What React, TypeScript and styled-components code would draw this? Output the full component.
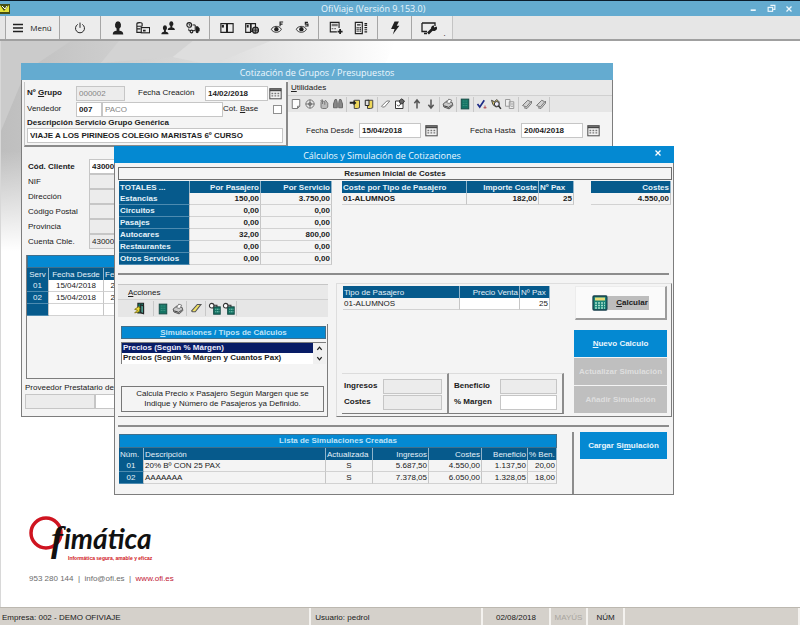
import React from "react";
import styled, { createGlobalStyle, css } from "styled-components";

const Global = createGlobalStyle`
  *, *::before, *::after { box-sizing: border-box; }
  html, body { margin: 0; padding: 0; }
  body { font: 8px/12px "Liberation Sans", Arial, sans-serif; color: #202020; background: #fff; }
  button, input, select, table { font: inherit; color: inherit; }
  button { padding: 0; border: 0; background: none; }
`;

const C = {
  sky: "#64abd0",
  blue: "#0489d2",
  navy: "#065a8c",
  face: "#f4f4f4",
  bar: "#e6e6e6",
  line: "#7d7d7d",
  soft: "#c6c6c6",
};

/* ---------- shell ---------- */

const Shell = styled.div`
  display: flex;
  flex-direction: column;
  min-height: 100vh;
`;

const TitleBar = styled.header`
  display: grid;
  grid-template-columns: 6fr auto 7fr;
  align-items: center;
  height: 16px;
  border-top: 1px solid #0b1c2c;
  background: ${C.sky};
  color: #eaf6fc;
  font: 9px/14px "Open Sans", sans-serif;
`;

const AppTitle = styled.h1`
  margin: 0;
  font: inherit;
  white-space: nowrap;
`;

const WindowControls = styled.div`
  display: flex;
  justify-content: flex-end;
  gap: 8px;
  padding-right: 6px;
`;

const ControlButton = styled.button`
  display: flex;
  align-items: center;
  justify-content: center;
  width: 10px;
  height: 12px;
  color: #eef8fd;
`;

const MainToolbar = styled.nav`
  display: flex;
  align-items: stretch;
  height: 25px;
  padding-left: 5px;
  background: ${C.bar};
  border-bottom: 2px solid #a0a0a0;
  font: 8px/12px "Open Sans", sans-serif;
`;

const ToolGroup = styled.div<{ $last?: boolean }>`
  display: flex;
  padding: 0 4px;
  background: #ececec;
  border-left: 1px solid #a6a6a6;
  ${(p) => p.$last && css`border-right: 1px solid #c4c4c4;`}
`;

const ToolButton = styled.button<{ $wide?: boolean }>`
  display: flex;
  align-items: center;
  justify-content: center;
  gap: 7px;
  width: ${(p) => (p.$wide ? "45px" : "25px")};
`;

const PowerButton = styled(ToolButton)`
  width: 32px;
`;

const DropMark = styled.button`
  align-self: flex-end;
  width: 7px;
  line-height: 12px;
`;

const Desktop = styled.main`
  position: relative;
  flex: 1;
  overflow: hidden;
  border-left: 1px solid #d8d8d8;
`;

const Backdrop = styled.svg`
  position: absolute;
  inset: 0;
  width: 100%;
  height: 100%;
`;

const StatusBar = styled.footer`
  display: flex;
  height: 18px;
  background: #d5d1cb;
  border-top: 1px solid #bcb8b0;
  line-height: 19px;
`;

const StatusCell = styled.div<{ $w?: number; $grow?: boolean; $off?: boolean; $center?: boolean }>`
  ${(p) => (p.$grow ? "flex: 1;" : `flex: 0 0 ${p.$w}px;`)}
  padding-left: ${(p) => (p.$center ? 0 : 2)}px;
  text-align: ${(p) => (p.$center ? "center" : "left")};
  border-right: 2px solid #f4f2ef;
  color: ${(p) => (p.$off ? "#a9a59e" : "inherit")};
  white-space: nowrap;
`;

/* ---------- windows ---------- */

const Window = styled.section<{ $x: number; $y: number; $w: number }>`
  position: absolute;
  left: ${(p) => p.$x}px;
  top: ${(p) => p.$y}px;
  width: ${(p) => p.$w}px;
  background: ${C.face};
  border: 1px solid ${C.line};
  border-top: 0;
`;

const WindowHead = styled.header<{ $active?: boolean }>`
  position: relative;
  margin: 0 -1px;
  height: 17px;
  background: ${(p) => (p.$active ? C.blue : C.sky)};
  color: #eef8fe;
  text-align: center;
`;

const WindowTitle = styled.h2<{ $shift?: boolean }>`
  margin: 0;
  padding-right: ${(p) => (p.$shift ? 24 : 0)}px;
  font: 9px/20px "Open Sans", sans-serif;
`;

const WindowClose = styled.button`
  position: absolute;
  right: 12px;
  top: 3px;
  width: 8px;
  height: 8px;
  display: flex;
  color: #fff;
`;

/* ---------- form parts ---------- */

const Row = styled.div<{ $h?: number }>`
  display: flex;
  align-items: center;
  height: ${(p) => p.$h ?? 16}px;
`;

const Label = styled.label<{ $w?: number; $bold?: boolean; $indent?: number }>`
  flex: none;
  ${(p) => p.$w && `width: ${p.$w}px;`}
  padding-left: ${(p) => p.$indent ?? 0}px;
  font-weight: ${(p) => (p.$bold ? 700 : 400)};
  white-space: nowrap;
`;

const Field = styled.input<{ $w?: number; $bold?: boolean; $off?: boolean; $pale?: boolean }>`
  ${(p) => (p.$w ? `flex: none; width: ${p.$w}px;` : "flex: 1; min-width: 0; width: 100%;")}
  height: 15px;
  padding: 0 2px;
  border: 1px solid ${C.soft};
  border-radius: 0;
  outline: 0;
  background: ${(p) => (p.$off ? "#ececec" : "#fff")};
  color: ${(p) => (p.$pale ? "#858585" : "#1c1c1c")};
  font-weight: ${(p) => (p.$bold ? 700 : 400)};
`;

const Tick = styled.input`
  appearance: none;
  width: 9px;
  height: 9px;
  margin: 0 1px 0 auto;
  border: 1px solid #8f8f8f;
  background: #fff;
`;

const IconButton = styled.button<{ $w?: number }>`
  display: flex;
  align-items: center;
  justify-content: center;
  width: ${(p) => p.$w ?? 14}px;
  height: 15px;
`;

/* ---------- tables ---------- */

const Grid = styled.table`
  border-collapse: separate;
  border-spacing: 0;
  table-layout: fixed;
  width: 100%;
`;

const Th = styled.th<{ $align?: string; $plain?: boolean }>`
  height: 12px;
  padding: 0 1px;
  background: ${C.navy};
  color: #e4f1f9;
  border-right: 1px solid #8fb4cb;
  font-weight: ${(p) => (p.$plain ? 400 : 700)};
  line-height: 11px;
  text-align: ${(p) => p.$align ?? "left"};
  white-space: nowrap;
  overflow: hidden;
`;

const RowTh = styled(Th)`
  border-bottom: 1px solid #4d8bb0;
  border-right-color: ${C.soft};
`;

const Td = styled.td<{ $align?: string; $bold?: boolean; $white?: boolean }>`
  height: 12px;
  padding: 0 1px;
  border-right: 1px solid ${C.soft};
  border-bottom: 1px solid #d2d2d2;
  background: ${(p) => (p.$white ? "#fff" : "transparent")};
  font-weight: ${(p) => (p.$bold ? 700 : 400)};
  line-height: 11px;
  text-align: ${(p) => p.$align ?? "left"};
  white-space: nowrap;
  overflow: hidden;
`;

/* ---------- groups window ---------- */

const GroupsTop = styled.div`
  display: grid;
  grid-template-columns: 266px minmax(0, 1fr);
`;

const GroupBox = styled.div`
  margin: 2px 0 0 2px;
  padding: 3px 3px 2px 2px;
  border-right: 2px solid #8a8a8a;
  border-bottom: 2px solid #8a8a8a;
  border-left: 1px solid ${C.soft};
`;

const MenuStrip = styled.div`
  height: 16px;
  padding-left: 3px;
  background: #e9e9e9;
  border-bottom: 1px solid #d0d0d0;
  line-height: 16px;
`;

const SmallTools = styled.div`
  display: flex;
  align-items: center;
  height: 16px;
  background: ${C.bar};
`;

const SmallGroup = styled.div`
  display: flex;
  padding: 0 1px;
  border-right: 1px solid #c8c8c8;
`;

const DatesRow = styled.div`
  display: flex;
  align-items: center;
  gap: 32px;
  padding: 11px 0 7px 18px;
`;

const DateGroup = styled.div`
  display: flex;
  align-items: center;
  gap: 3px;
`;

const ClientForm = styled.div`
  padding: 12px 6px 6px;
`;

const ServicesPanel = styled.div`
  min-height: 124px;
  margin: 0 5px 0 4px;
  border-left: 1px solid ${C.line};
  border-bottom: 1px solid ${C.line};
`;

const BlueBand = styled.div<{ $h?: number }>`
  display: block;
  height: ${(p) => p.$h ?? 13}px;
  background: ${C.blue};
  border: 1px solid #3f6f8c;
  color: #bfe3f7;
  font-weight: 700;
  line-height: ${(p) => (p.$h ?? 13) - 2}px;
  text-align: center;
`;

const ProviderArea = styled.div`
  padding: 3px 4px 8px 3px;
`;

/* ---------- calculation window ---------- */

const CalcBody = styled.div`
  padding: 4px 1px 0 3px;
`;

const Summary = styled.div`
  height: 13px;
  border: 1px solid #6d6d6d;
  font-weight: 700;
  line-height: 11px;
  text-align: center;
`;

const Totals = styled.div`
  display: grid;
  grid-template-columns: 213px 232px 80px;
  column-gap: 10px;
  align-items: start;
  padding: 1px 0 0 1px;
  table:last-child { margin-left: 7px; }
`;

const Rule = styled.hr`
  height: 2px;
  margin: 8px 3px 0 0;
  border: 0;
  background: #8c8c8c;
`;

const Middle = styled.div`
  display: grid;
  grid-template-columns: 210px 1fr;
  gap: 8px;
  padding-top: 8px;
`;

const ActionsStrip = styled(MenuStrip)`
  margin-top: 1px;
  padding-left: 10px;
  border-top: 1px solid ${C.soft};
`;

const ActionTools = styled(SmallTools)`
  height: 17px;
  padding-left: 8px;
`;

const TypeBox = styled.div`
  height: 93px;
  margin-top: 7px;
  padding: 2px 1px 0 3px;
  border-right: 1px solid ${C.line};
  border-bottom: 1px solid ${C.line};
`;

const ListRow = styled.div`
  display: grid;
  grid-template-columns: 1fr 13px;
  height: 22px;
  margin-top: 3px;
  border-top: 1px solid ${C.line};
  border-left: 1px solid ${C.line};
  background: #fff;
`;

const TypeList = styled.select`
  height: 21px;
  padding: 0;
  border: 0;
  outline: 0;
  border-radius: 0;
  overflow: hidden;
  scrollbar-width: none;
  background: #fff;

  option {
    min-height: 10px;
    height: 10px;
    padding: 0 1px;
    font-weight: 700;
    line-height: 10px;
  }
  option:checked {
    background: linear-gradient(#081c66, #081c66);
    -webkit-text-fill-color: #eef;
  }
`;

const Spinner = styled.div`
  display: grid;
  background: #f0f0f0;
  button { display: flex; align-items: center; justify-content: center; }
`;

const Hint = styled.p`
  margin: 22px 2px 0 0;
  padding: 2px 6px;
  border: 1px solid #777;
  line-height: 10px;
  text-align: center;
`;

const CalcPanel = styled.div`
  display: grid;
  grid-template-columns: 1fr 93px;
  gap: 6px;
  padding: 2px 4px 2px 5px;
  border: 1px solid #dedede;
  border-right-color: ${C.line};
  border-bottom-color: ${C.line};
`;

const PassengerArea = styled.div`
  display: flex;
  flex-direction: column;
  justify-content: space-between;
`;

const PassengerTable = styled.div`
  width: 208px;
  padding-left: 1px;
`;

const Results = styled.div`
  display: grid;
  grid-template-columns: 107px 115px;
`;

const ResultBox = styled.div`
  padding: 4px 5px 3px 2px;
  border-top: 1px solid #dcdcdc;
  border-right: 2px solid #8c8c8c;
  border-bottom: 1px solid ${C.line};
`;

const SideButtons = styled.div`
  display: flex;
  flex-direction: column;
  gap: 1px;
`;

const CalcButton = styled.button`
  display: flex;
  align-items: center;
  justify-content: center;
  height: 34px;
  margin: 0 0 9px 1px;
  background: #fafafa;
  border: 1px solid #ececec;
  border-right: 2px solid #9c9c9c;
  border-bottom: 2px solid #9c9c9c;
  font-weight: 700;
`;

const CalcCaption = styled.span`
  padding: 0 1px 0 8px;
  height: 14px;
  background: #bdbdbd;
  line-height: 14px;
`;

const Action = styled.button<{ $off?: boolean; $w?: number }>`
  height: 27px;
  ${(p) => p.$w && `width: ${p.$w}px;`}
  background: ${(p) => (p.$off ? "#bfbfbf" : C.blue)};
  color: ${(p) => (p.$off ? "#dedede" : "#e9f6fd")};
  font-weight: 700;
  white-space: nowrap;
`;

const Created = styled.div`
  display: grid;
  grid-template-columns: 438px 1fr;
  gap: 15px;
  padding-left: 1px;
`;

const CreatedList = styled.div`
  padding: 7px 0 10px;
`;

const LoadArea = styled.div`
  margin-top: 5px;
  padding-left: 6px;
  border-left: 2px solid #8c8c8c;
`;

/* ---------- brand ---------- */

const Brand = styled.address`
  position: absolute;
  left: 28px;
  bottom: 22px;
  font-style: normal;
  color: #6c6c6c;
`;

const Logo = styled.svg`
  display: block;
  width: 128px;
  height: 50px;
  margin-bottom: 6px;
  overflow: visible;
`;

const Contact = styled.div`
  white-space: nowrap;
  a { color: inherit; text-decoration: none; }
  a:last-child { color: #bf2038; }
`;

/* ---------- icons ---------- */

const Svg = ({ s = 14, children }: { s?: number; children: React.ReactNode }) => (
  <svg width={s} height={s} viewBox="0 0 16 16" fill="none" stroke="currentColor" strokeWidth="1.3" aria-hidden="true">
    {children}
  </svg>
);

const fill = { fill: "currentColor", stroke: "none" };
const person = "M0 -6.500a3 3.500 0 0 1 1.300 6.500v2.200c2.200.3 3.500 1 3.500 3.300h-9.600c0-2.300 1.300-3 3.500-3.300v-2.200a3 3.500 0 0 1 1.300-6.500z";

const icons: Record<string, React.ReactNode> = {
  menu: <path d="M0 2.500h16M0 8h16M0 13.500h16" strokeWidth="2.400" />,
  power: <path d="M5 3.200a6 6 0 1 0 6 0M8 .8v7" strokeWidth="1.300" />,
  user: <path d={person} transform="translate(8 8.500) scale(1.250)" {...fill} />,
  cards: (
    <>
      <path d="M1 3c0-1.600 6-1.600 6 0v3M1 3v10h5M1 6h6M1 9h4" />
      <rect x="6" y="7.500" width="9.500" height="6" />
      <path d="M8 11h3" strokeWidth="2" />
    </>
  ),
  users: (
    <>
      <path d={person} transform="translate(4.500 10.500) scale(.85)" {...fill} />
      <path d={person} transform="translate(11.800 5.700) scale(.85)" {...fill} />
    </>
  ),
  truck: (
    <>
      <circle cx="3.700" cy="4.500" r="2.700" />
      <path d="M3.700 3v1.800h1.300M7.500 4.500h3v6.500H8M3.200 8.500v2.500h1.500" strokeWidth="1.100" />
      <path d="M11 6h2.600l2 2.600v3.200H11z" {...fill} />
      <circle cx="6.300" cy="12" r="1.500" />
      <circle cx="12.800" cy="12.200" r="1.700" {...fill} />
    </>
  ),
  book: (
    <>
      <path d="M1 3h6.500v10H1zM8.500 3H15v10H8.500z" />
      <path d="M2 4.500h2.500v3H2z" {...fill} />
    </>
  ),
  bookWorld: (
    <>
      <path d="M.8 3h5.500v10H.8zM7 3h5v9H7z" />
      <path d="M2 4.500h2.200v3H2z" {...fill} />
      <circle cx="12" cy="10.500" r="3.500" fill="#888" />
      <path d="M8.500 10.500h7M12 7v7" strokeWidth=".8" />
    </>
  ),
  eyeF: (
    <>
      <path d="M1.500 9.500c1.500-4 9-5 11.500 0-2 4.500-9.500 4.500-11.500 0z" strokeWidth="1" />
      <circle cx="7.300" cy="9.300" r="2.500" {...fill} />
      <path d="M11.500 6V1.200h3.500M11.500 3.500h2.800" />
    </>
  ),
  eyeS: (
    <>
      <path d="M1.500 9.500c1.500-4 9-5 11.500 0-2 4.500-9.500 4.500-11.500 0z" strokeWidth="1" />
      <circle cx="7.300" cy="9.300" r="2.500" {...fill} />
      <path d="M14.800 1.500h-3v2h3v2.200h-3.300" />
    </>
  ),
  docPlus: (
    <>
      <path d="M11.500 8V1.500h-10v11H9" />
      <path d="M3 3h7v3H3zM3 8h2v1.500H3zM6 8h2v1.500H6z" fill="#777" stroke="none" />
      <path d="M9.800 12h5.700M12.700 9.200v5.600" strokeWidth="2" />
    </>
  ),
  docList: (
    <>
      <path d="M1.500 1.500h8v13h-8zM3.500 4.500h4" />
      <path d="M3 7.500h5M3 9.500h5M3 11.500h5" strokeDasharray="1.200 .8" />
      <path d="M12 3h3M12 5h3M12 7.500h3M12 10h3M12 12.500h3" />
    </>
  ),
  bolt: <path d="M7.500 .5h5L10 5.500H13L5.500 15.500 7.500 9H3.500z" {...fill} />,
  screen: (
    <>
      <path d="M1 3h13v3M1 3v8.500h5M3 13.500h3" />
      <path d="M7 13.500l4.500-4.500" strokeWidth="2.600" />
      <path d="M10.500 9.500a2.600 2.600 0 0 1 2.500-4v2l2.500-1a2.600 2.600 0 0 1-5 3z" {...fill} />
    </>
  ),
  close: <path d="M3 3l10 10M13 3L3 13" strokeWidth="2.600" />,
  min: <path d="M3 11h9" strokeWidth="3" />,
  restore: (
    <>
      <path d="M6 2.500h8v7h-3" strokeWidth="2" />
      <rect x="2" y="6" width="8" height="7" strokeWidth="2" />
    </>
  ),
  calendar: (
    <>
      <rect x="1" y="2" width="14" height="12.500" fill="#f3f3f3" stroke="#555" />
      <path d="M1 4h14" stroke="#444" strokeWidth="2.400" />
      <path d="M3 8h10M3 11h10" stroke="#777" strokeWidth="1.600" strokeDasharray="2.200 1.500" />
    </>
  ),
  page: <path d="M3 2h10v9l-3 3H3zM10 14v-3h3" fill="#fdfdfd" stroke="#777" />,
  wheel: (
    <g stroke="#777">
      <circle cx="8" cy="8" r="5.500" />
      <circle cx="8" cy="8" r="2" fill="#777" />
      <path d="M8 2v4M8 10v4M2 8h4M10 8h4" />
    </g>
  ),
  hand: (
    <g stroke="#777">
      <path d="M4 13V6l2-3 2 2 2-2 3 4v5l-2 2H6z" fill="#bbb" />
      <path d="M6 3v5M9 5v4M3 4l3-2" />
    </g>
  ),
  binoc: (
    <g fill="#888" stroke="#666">
      <path d="M4 2h2l1 4v7H2V8zM12 2h-2l-1 4v7h5V8z" />
    </g>
  ),
  note: (
    <>
      <path d="M7 3h7v10l-3 1H7z" fill="#eed75a" stroke="#444" />
      <path d="M1 5h5V3l4 3.500-4 3v-2H1z" fill="#222" stroke="none" />
    </>
  ),
  scroll: (
    <>
      <path d="M6 3h7v10l-3 1H6z" fill="#eed75a" stroke="#444" />
      <path d="M3 3h5v7H3z" fill="#ddd" stroke="#222" />
    </>
  ),
  eraser: <path d="M2 11l7-7h4l-7 8H3z" fill="#fff" stroke="#777" />,
  eraserY: <path d="M2 11l7-8h4.500l-7 9H3z" fill="#f2e265" stroke="#555" />,
  edit: (
    <>
      <path d="M2 4h10v10H2z" fill="#fff" stroke="#333" />
      <path d="M7 4l3-3 4 3-3 4-3-1z" fill="#666" stroke="#333" />
      <path d="M4 9l2 2 3-3" stroke="#333" />
    </>
  ),
  up: <path d="M8 14V4M4.500 7L8 2.500 11.500 7" stroke="#555" strokeWidth="2" />,
  down: <path d="M8 2v10M4.500 9L8 13.500 11.500 9" stroke="#555" strokeWidth="2" />,
  print: (
    <>
      <path d="M1.500 8l5-4 7 2 1 4-5 4.500-7-2.500z" fill="#c9c9c9" stroke="#555" />
      <path d="M6 6l3-4.500 4 1.500-3 4.500z" fill="#fff" stroke="#777" />
      <path d="M3 10.500l6 2 4-3" stroke="#333" />
    </>
  ),
  door: (
    <>
      <rect x="3" y="1.500" width="10" height="13" fill="#147464" stroke="#174c46" />
      <path d="M5 4h6M5 7h6M5 10h6" stroke="#3f9482" strokeDasharray="1.500 .8" />
    </>
  ),
  check: (
    <>
      <path d="M2 8l3 4 6-9" stroke="#1c2a86" strokeWidth="2.200" />
      <path d="M10 13h4M12 10v4" stroke="#b04a50" />
    </>
  ),
  search: (
    <>
      <path d="M2 3l4 2 3-3 3 3v6l-4 1-4-3z" fill="#d7c46a" stroke="#444" />
      <circle cx="9" cy="8" r="3.200" fill="#eef" stroke="#333" />
      <path d="M11.500 10.500l3 4" stroke="#333" strokeWidth="2" />
    </>
  ),
  copy: <path d="M2 2h6v9H2zM7 5h6v9H7zM9 8h3M9 11h3" fill="#eee" stroke="#999" />,
  clip: <path d="M2 10l7-7 4 2-6 7zM4 13l4 1 6-7V4" fill="#d0d0d0" stroke="#777" />,
  exit: (
    <>
      <path d="M6 1.500h7v12H6z" fill="#147464" stroke="#222" />
      <path d="M9.500 3.500l3.500 1.500v9.500l-3.500-1.500z" fill="#4c9a8e" stroke="#222" />
      <path d="M7.500 5.500L2 9l3.500 1L2 13.500l5.500-1.500 1-4z" fill="#f0dc35" stroke="#776a10" strokeWidth="1" />
    </>
  ),
  sim: (
    <>
      <rect x="7" y="6" width="8" height="9" fill="#147464" stroke="#174c46" />
      <path d="M9 9h5M9 12h5" stroke="#8fd0c0" strokeDasharray="1.200 .8" />
      <circle cx="4.500" cy="4.500" r="2.800" fill="#fff" stroke="#333" />
      <path d="M7 4h4v2" stroke="#333" />
    </>
  ),
  calc: (
    <>
      <rect x="1" y="1" width="14" height="14" rx="1" fill="#178277" stroke="#173f4c" />
      <rect x="3" y="2.500" width="10" height="3" fill="#e7dc79" stroke="none" />
      <path d="M3 8h10M3 10.500h10M3 13h10" stroke="#a6e0cc" strokeWidth="1.500" strokeDasharray="2 1" />
    </>
  ),
  arrowUp: <path d="M3 11l5-6 5 6" strokeWidth="3" />,
  arrowDown: <path d="M3 5l5 6 5-6" strokeWidth="3" />,
};

const Icon = ({ name, s }: { name: string; s?: number }) => <Svg s={s}>{icons[name]}</Svg>;

/* ---------- data ---------- */

const mainTools = [
  ["user:Clientes", "cards:Tarjetas", "users:Usuarios", "truck:Transportes"],
  ["book:Catálogo", "bookWorld:Catálogo internacional", "eyeF:Ver facturas", "eyeS:Ver servicios"],
  ["docPlus:Nuevo documento", "docList:Documentos"],
  ["bolt:Acceso rápido"],
];

const utilities = [
  ["page", "wheel", "hand", "binoc"],
  ["note", "scroll"],
  ["eraser", "edit"],
  ["up", "down"],
  ["print"],
  ["door"],
  ["check", "search", "copy"],
  ["clip", "clip"],
];

const clientRows = [
  { id: "nif", label: "NIF", value: "" },
  { id: "dir", label: "Dirección", value: "" },
  { id: "cp", label: "Código Postal", value: "" },
  { id: "prov", label: "Provincia", value: "" },
  { id: "cta", label: "Cuenta Cble.", value: "43000001" },
];

const totals = [
  ["Estancias", "150,00", "3.750,00"],
  ["Circuitos", "0,00", "0,00"],
  ["Pasajes", "0,00", "0,00"],
  ["Autocares", "32,00", "800,00"],
  ["Restaurantes", "0,00", "0,00"],
  ["Otros Servicios", "0,00", "0,00"],
];

const simulations = [
  ["01", "20% Bº CON 25 PAX", "S", "5.687,50", "4.550,00", "1.137,50", "20,00"],
  ["02", "AAAAAAA", "S", "7.378,05", "6.050,00", "1.328,05", "18,00"],
];

/* ---------- views ---------- */

const Cols = ({ w }: { w: (number | undefined)[] }) => (
  <colgroup>
    {w.map((n, i) => (
      <col key={i} width={n} />
    ))}
  </colgroup>
);

function GroupsWindow() {
  return (
    <Window $x={20} $y={22} $w={592}>
      <WindowHead>
        <WindowTitle>Cotización de Grupos / Presupuestos</WindowTitle>
      </WindowHead>
      <GroupsTop>
        <GroupBox>
          <Row>
            <Label htmlFor="grupo" $w={49} $bold>Nº <u>G</u>rupo</Label>
            <Field id="grupo" $w={49} $off $pale readOnly defaultValue="000002" />
            <Label htmlFor="creacion" $w={80} $indent={13}>Fecha Creación</Label>
            <Field id="creacion" $w={63} $bold defaultValue="14/02/2018" />
            <IconButton aria-label="Calendario"><Icon name="calendar" s={13} /></IconButton>
          </Row>
          <Row>
            <Label htmlFor="vendedor" $w={49}>Vendedor</Label>
            <Field id="vendedor" $w={26} $bold defaultValue="007" />
            <Field aria-label="Nombre del vendedor" $w={121} $pale defaultValue="PACO" />
            <Label htmlFor="base">Cot. <u>B</u>ase</Label>
            <Tick id="base" type="checkbox" />
          </Row>
          <Row $h={11}>
            <Label htmlFor="desc" $bold>Descripción Servicio Grupo Genérica</Label>
          </Row>
          <Row $h={15}>
            <Field id="desc" $bold defaultValue="VIAJE A LOS PIRINEOS COLEGIO MARISTAS 6º CURSO" />
          </Row>
        </GroupBox>
        <div>
          <MenuStrip><u>U</u>tilidades</MenuStrip>
          <SmallTools>
            {utilities.map((g, i) => (
              <SmallGroup key={i}>
                {g.map((n, j) => (
                  <IconButton key={j} aria-label={n}><Icon name={n} s={12} /></IconButton>
                ))}
              </SmallGroup>
            ))}
          </SmallTools>
          <DatesRow>
            <DateGroup>
              <Label htmlFor="desde" $w={50}>Fecha Desde</Label>
              <Field id="desde" $w={62} $bold defaultValue="15/04/2018" />
              <IconButton aria-label="Calendario"><Icon name="calendar" s={13} /></IconButton>
            </DateGroup>
            <DateGroup>
              <Label htmlFor="hasta" $w={48}>Fecha Hasta</Label>
              <Field id="hasta" $w={62} $bold defaultValue="20/04/2018" />
              <IconButton aria-label="Calendario"><Icon name="calendar" s={13} /></IconButton>
            </DateGroup>
          </DatesRow>
        </div>
      </GroupsTop>
      <ClientForm>
        <Row $h={15}>
          <Label htmlFor="cliente" $w={61} $bold>Cód. Cliente</Label>
          <Field id="cliente" $w={80} $bold defaultValue="43000001" />
        </Row>
        {clientRows.map((r) => (
          <Row key={r.id} $h={15}>
            <Label htmlFor={r.id} $w={61}>{r.label}</Label>
            <Field id={r.id} $w={80} $off readOnly defaultValue={r.value} />
          </Row>
        ))}
      </ClientForm>
      <ServicesPanel>
        <BlueBand />
        <Grid>
          <Cols w={[22, 55, 54, undefined]} />
          <thead>
            <tr>
              <Th $plain $align="center">Serv</Th>
              <Th $plain $align="center">Fecha Desde</Th>
              <Th $plain>Fecha Hasta</Th>
              <Th $plain>Servicio</Th>
            </tr>
          </thead>
          <tbody>
            {["01", "02", ""].map((n) => (
              <tr key={n}>
                <RowTh $plain $align="center">{n}</RowTh>
                <Td $white $align="center">{n && "15/04/2018"}</Td>
                <Td $white $align="center">{n && "20/04/2018"}</Td>
                <Td $white />
              </tr>
            ))}
          </tbody>
        </Grid>
      </ServicesPanel>
      <ProviderArea>
        <Label htmlFor="prestatario">Proveedor Prestatario del Servicio</Label>
        <Row $h={14}>
          <Field id="prestatario" $w={70} $off readOnly />
          <Field aria-label="Nombre del proveedor" />
        </Row>
      </ProviderArea>
    </Window>
  );
}

function CalcWindow() {
  return (
    <Window $x={113} $y={105} $w={560}>
      <WindowHead $active>
        <WindowTitle $shift>Cálculos y Simulación de Cotizaciones</WindowTitle>
        <WindowClose aria-label="Cerrar"><Icon name="close" s={8} /></WindowClose>
      </WindowHead>
      <CalcBody>
        <Summary>Resumen Inicial de Costes</Summary>
        <Totals>
          <Grid>
            <Cols w={[71, 71, 71]} />
            <thead>
              <tr><Th>TOTALES ...</Th><Th $align="right">Por Pasajero</Th><Th $align="right">Por Servicio</Th></tr>
            </thead>
            <tbody>
              {totals.map((t) => (
                <tr key={t[0]}>
                  <RowTh scope="row">{t[0]}</RowTh>
                  <Td $bold $align="right">{t[1]}</Td>
                  <Td $bold $align="right">{t[2]}</Td>
                </tr>
              ))}
            </tbody>
          </Grid>
          <Grid>
            <Cols w={[125, 72, 35]} />
            <thead>
              <tr><Th>Coste por Tipo de Pasajero</Th><Th $align="right">Importe Coste</Th><Th>Nº Pax</Th></tr>
            </thead>
            <tbody>
              <tr><Td $bold>01-ALUMNOS</Td><Td $bold $align="right">182,00</Td><Td $bold $align="right">25</Td></tr>
            </tbody>
          </Grid>
          <Grid>
            <thead><tr><Th $align="right">Costes</Th></tr></thead>
            <tbody><tr><Td $bold $align="right">4.550,00</Td></tr></tbody>
          </Grid>
        </Totals>
        <Rule />
        <Middle>
          <div>
            <ActionsStrip><u>A</u>cciones</ActionsStrip>
            <ActionTools>
              <SmallGroup><IconButton $w={25} aria-label="Salir"><Icon name="exit" s={13} /></IconButton></SmallGroup>
              <SmallGroup>
                <IconButton $w={16} aria-label="Ver"><Icon name="door" s={12} /></IconButton>
                <IconButton aria-label="Imprimir"><Icon name="print" s={12} /></IconButton>
              </SmallGroup>
              <SmallGroup><IconButton $w={16} aria-label="Borrar"><Icon name="eraserY" s={13} /></IconButton></SmallGroup>
              <SmallGroup>
                <IconButton aria-label="Simular"><Icon name="sim" s={13} /></IconButton>
                <IconButton aria-label="Simular todo"><Icon name="sim" s={13} /></IconButton>
              </SmallGroup>
            </ActionTools>
            <TypeBox>
              <BlueBand as="label" htmlFor="tipos"><u>S</u>imulaciones / Tipos de Cálculos</BlueBand>
              <ListRow>
                <TypeList id="tipos" size={2} defaultValue="a">
                  <option value="a">Precios (Según % Márgen)</option>
                  <option value="b">Precios (Según % Márgen y Cuantos Pax)</option>
                </TypeList>
                <Spinner>
                  <button aria-label="Subir"><Icon name="arrowUp" s={7} /></button>
                  <button aria-label="Bajar"><Icon name="arrowDown" s={7} /></button>
                </Spinner>
              </ListRow>
              <Hint>Calcula Precio x Pasajero Según Margen que se Indique y Número de Pasajeros ya Definido.</Hint>
            </TypeBox>
          </div>
          <CalcPanel>
            <PassengerArea>
              <PassengerTable>
                <Grid>
                  <Cols w={[117, 60, 30]} />
                  <thead>
                    <tr><Th $plain>Tipo de Pasajero</Th><Th $plain $align="right">Precio Venta</Th><Th $plain>Nº Pax</Th></tr>
                  </thead>
                  <tbody>
                    <tr><Td>01-ALUMNOS</Td><Td $white /><Td $white $align="right">25</Td></tr>
                  </tbody>
                </Grid>
              </PassengerTable>
              <Results>
                <ResultBox>
                  <Row><Label htmlFor="ing" $w={39} $bold>Ingresos</Label><Field id="ing" $off readOnly /></Row>
                  <Row><Label htmlFor="cos" $w={39} $bold>Costes</Label><Field id="cos" $off readOnly /></Row>
                </ResultBox>
                <ResultBox>
                  <Row><Label htmlFor="ben" $w={49} $indent={3} $bold>Beneficio</Label><Field id="ben" $off readOnly /></Row>
                  <Row><Label htmlFor="mar" $w={49} $indent={3} $bold>% Margen</Label><Field id="mar" /></Row>
                </ResultBox>
              </Results>
            </PassengerArea>
            <SideButtons>
              <CalcButton><Icon name="calc" s={16} /><CalcCaption><u>C</u>alcular</CalcCaption></CalcButton>
              <Action><u>N</u>uevo Calculo</Action>
              <Action $off disabled>Actualizar Simulación</Action>
              <Action $off disabled>Añadir Simulación</Action>
            </SideButtons>
          </CalcPanel>
        </Middle>
        <Rule />
        <Created>
          <CreatedList>
            <BlueBand $h={14}>Lista de Simulaciones Creadas</BlueBand>
            <Grid>
              <Cols w={[25, 182, 47, 56, 53, 46, 29]} />
              <thead>
                <tr>
                  <Th $plain>Núm.</Th>
                  <Th $plain>Descripción</Th>
                  <Th $plain>Actualizada</Th>
                  <Th $plain $align="right">Ingresos</Th>
                  <Th $plain $align="right">Costes</Th>
                  <Th $plain $align="right">Beneficio</Th>
                  <Th $plain>% Ben.</Th>
                </tr>
              </thead>
              <tbody>
                {simulations.map((s) => (
                  <tr key={s[0]}>
                    <RowTh $plain $align="center">{s[0]}</RowTh>
                    <Td>{s[1]}</Td>
                    <Td $align="center">{s[2]}</Td>
                    {s.slice(3).map((v) => <Td key={v} $align="right">{v}</Td>)}
                  </tr>
                ))}
              </tbody>
            </Grid>
          </CreatedList>
          <LoadArea>
            <Action $w={87}>Cargar Si<u>m</u>ulación</Action>
          </LoadArea>
        </Created>
      </CalcBody>
    </Window>
  );
}

export default function App() {
  return (
    <Shell>
      <Global />
      <TitleBar>
        <svg width="11" height="12" viewBox="0 0 11 12" aria-hidden="true">
          <path d="M0 1h10v10H0z" fill="#465016" />
          <path d="M0 2l4 6 5-6v7H0z" fill="#e3e23c" />
          <path d="M2 3l3 3 2-3" fill="none" stroke="#fff" />
        </svg>
        <AppTitle>OfiViaje (Versión 9.153.0)</AppTitle>
        <WindowControls>
          <ControlButton aria-label="Minimizar"><Icon name="min" s={9} /></ControlButton>
          <ControlButton aria-label="Restaurar"><Icon name="restore" s={9} /></ControlButton>
          <ControlButton aria-label="Cerrar"><Icon name="close" s={8} /></ControlButton>
        </WindowControls>
      </TitleBar>
      <MainToolbar>
        <ToolGroup><ToolButton $wide><Icon name="menu" s={10} />Menú</ToolButton></ToolGroup>
        <ToolGroup><PowerButton aria-label="Salir"><Icon name="power" s={12} /></PowerButton></ToolGroup>
        {mainTools.map((g) => (
          <ToolGroup key={g[0]}>
            {g.map((t) => {
              const [name, label] = t.split(":");
              return <ToolButton key={t} aria-label={label}><Icon name={name} /></ToolButton>;
            })}
          </ToolGroup>
        ))}
        <ToolGroup $last>
          <ToolButton aria-label="Herramientas"><Icon name="screen" s={16} /></ToolButton>
          <DropMark aria-label="Más">.</DropMark>
        </ToolGroup>
      </MainToolbar>
      <Desktop>
        <Backdrop viewBox="0 0 800 566" preserveAspectRatio="none" aria-hidden="true">
          <defs>
            <linearGradient id="fadeX" x1="0" x2="1" y1="0" y2="0">
              <stop offset="0" stopColor="#bebebe" />
              <stop offset=".45" stopColor="#d6d6d6" />
              <stop offset=".75" stopColor="#ececec" />
              <stop offset="1" stopColor="#ffffff" />
            </linearGradient>
            <linearGradient id="fadeY" x1="0" x2="0" y1="0" y2="1">
              <stop offset="0" stopColor="#fff" stopOpacity="0" />
              <stop offset="1" stopColor="#fff" />
            </linearGradient>
          </defs>
          <path d="M0 0H395L300 210H0z" fill="url(#fadeX)" />
          <path d="M0 0H70L25 30L0 90z" fill="#cbcbcb" />
          <path d="M118 0H192L172 16L100 22z" fill="#d3d3d3" />
          <path d="M192 0L172 16L210 24L270 0z" fill="#dedede" />
          <path d="M0 110H330V210H0z" fill="url(#fadeY)" />
        </Backdrop>
        <GroupsWindow />
        <CalcWindow />
        <Brand>
          <Logo viewBox="0 0 128 50" role="img" aria-label="Ofimática">
            <circle cx="17" cy="16" r="15" fill="none" stroke="#cf1420" strokeWidth="3.500" />
            <text x="22" y="34" fontFamily="Liberation Serif, serif" fontStyle="italic" fontWeight="700" fontSize="36" fill="#111">f</text>
            <text x="35" y="32" fontFamily="Lato, sans-serif" fontStyle="italic" fontWeight="700" fontSize="28" fill="#111">imática</text>
            <text x="39" y="43" fontFamily="Liberation Sans, sans-serif" fontWeight="700" fontSize="5" fill="#cf1420">Informática segura, amable y eficaz</text>
          </Logo>
          <Contact>
            953 280 144 &nbsp;|&nbsp; <a href="mailto:info@ofi.es">info@ofi.es</a> &nbsp;|&nbsp; <a href="http://www.ofi.es">www.ofi.es</a>
          </Contact>
        </Brand>
      </Desktop>
      <StatusBar>
        <StatusCell $w={311}>Empresa: 002 - DEMO OFIVIAJE</StatusCell>
        <StatusCell $w={172}>&nbsp;Usuario: pedrol</StatusCell>
        <StatusCell $w={68} $center>02/08/2018</StatusCell>
        <StatusCell $w={37} $center $off>MAYÚS</StatusCell>
        <StatusCell $w={37} $center>NÚM</StatusCell>
        <StatusCell $grow />
      </StatusBar>
    </Shell>
  );
}
